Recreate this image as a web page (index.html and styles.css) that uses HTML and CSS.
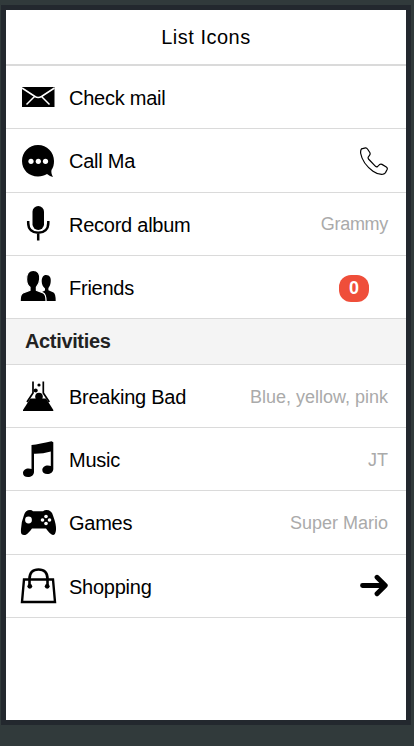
FILE: index.html
```html
<!DOCTYPE html>
<html lang="en">
<head>
<meta charset="utf-8">
<title>List Icons</title>
<link rel="stylesheet" href="styles.css">
</head>
<body>
<main class="screen">
  <header class="bar"><h1>List Icons</h1></header>
  <ul class="list">
    <li class="item">
      <svg class="icon" viewBox="0 0 36 36"><path d="M2 8h32.500v20H2z"/><path d="M2 9l13 8.500q3 2 6.500 0l13-8.500M6.500 25.500l8-8M29.500 25.500l-8-8" fill="none" stroke="#fff" stroke-width="1.500"/></svg>
      <span class="label">Check mail</span>
    </li>
    <li class="item tall">
      <svg class="icon" viewBox="0 0 36 36"><path d="M18 2C9 2 2 9 2 18s7 15.500 16 15.500c3.500 0 6.500-1 9-2.500 2 1.500 4 2.500 6 3-1.300-2.200-2-4.500-1.500-7 1.800-2.500 2.500-5.500 2.500-9 0-9-7-16-16-16z"/><g fill="#fff"><circle cx="11" cy="18.300" r="2.600"/><circle cx="18.300" cy="18.300" r="2.600"/><circle cx="25.500" cy="18.300" r="2.600"/></g></svg>
      <span class="label">Call Ma</span>
      <svg class="tail" viewBox="0 0 28 28"><path class="line" d="M1.500 1.800L5.500 .8Q6.800 .7 7.500 2l2.300 3.500q.8 1.500-.3 2.800L8.300 10q-.5 1 .2 2l7 7.300q1 .8 2 .3l2-2q1.200-.8 2.500-.2l4.300 2.500q1.500 1 .8 2.700l-1.600 3q-1 1.300-2.500 1.600-5 .6-10-3Q2.500 16.500 .7 6.500.3 3.500 1.500 1.800z"/></svg>
    </li>
    <li class="item">
      <svg class="icon" viewBox="0 0 36 36"><rect x="12.500" y="0" width="11.500" height="24" rx="5.750"/><path d="M8.200 15v2C8.200 23.500 12.500 26.800 18.200 26.800S28.300 23.500 28.300 17v-2M18.200 26.500v8" fill="none" stroke="#000" stroke-width="2.500"/></svg>
      <span class="label">Record album</span>
      <span class="note wide">Grammy</span>
    </li>
    <li class="item">
      <svg class="icon" viewBox="0 -1 36 36"><path d="M26 5c4 0 5.200 3 4.700 7-.2 3-1.500 5-2.300 6v2.300l5.100 2.200q2.200 1.200 2.200 8.500H26q0-6-2-8l-2-1 3-1.500V18.500c-2-2-3.300-4-3.300-7 0-4 1.500-6.500 4.300-6.500z"/><path stroke="#fff" stroke-width="1.200" d="M13.200 .4c5 0 7 3.500 6.500 9-.3 4-2 6.500-3.300 7.800v3.100l6.800 2.700q2.900 1.200 2.900 8.600H.1q0-7.400 2.900-8.600l7-2.700v-3.100C8 15.700 6.700 13.400 6.600 9.400c0-5.500 1.600-9 6.600-9z"/></svg>
      <span class="label">Friends</span>
      <span class="badge">0</span>
    </li>
  </ul>
  <h2 class="divider">Activities</h2>
  <ul class="list">
    <li class="item">
      <svg class="icon" viewBox="0 0 36 36"><path d="M13 3.500v11.500L7 24M23.300 3.500V15l6 9" fill="none" stroke="#000" stroke-width="1.700"/><path d="M10.300 20.500h15.800L33.300 32v1H3v-1z"/><circle cx="19" cy="18.500" r="3.800"/><circle cx="15.700" cy="12.500" r="2"/><circle cx="19" cy="7" r="1.600"/></svg>
      <span class="label">Breaking Bad</span>
      <span class="note">Blue, yellow, pink</span>
    </li>
    <li class="item">
      <svg class="icon" viewBox="0 0 36 36"><path d="M11.500 4Q20 3 31.500 .2l1.800 1V28c0 3-2.800 5-6 5-3 0-5-1.500-5-4s2.500-4.500 5.500-4.500q2 0 3 .6V10.500q-8 2.500-16.800 2.300V31c0 3-2.800 5-6 5s-5-1.500-5-4 2.500-4.500 5.500-4.500q2 0 3 .5V5z"/></svg>
      <span class="label">Music</span>
      <span class="note">JT</span>
    </li>
    <li class="item tall">
      <svg class="icon" viewBox="0 0 36 36"><path d="M10 5q2 0 3 1.200h10Q24.500 5 26.500 5q5 0 6.500 5.500Q36.500 20 36 25q-.5 5-3 5-2.500 0-7-6.500h-14C7 30 5.500 30 4 30 .8 30 .8 27 1 24Q1.500 16 4 10 5.500 5 10 5z"/><g fill="#fff"><circle cx="8.500" cy="15" r="3.400"/><circle cx="26" cy="11.500" r="1.800"/><circle cx="26" cy="18.500" r="1.800"/><circle cx="22.500" cy="15" r="1.800"/><circle cx="29.500" cy="15" r="1.800"/></g></svg>
      <span class="label">Games</span>
      <span class="note">Super Mario</span>
    </li>
    <li class="item">
      <svg class="icon" viewBox="0 0 36 36"><path d="M4 11.500h29l2 22.500H2z" fill="none" stroke="#000" stroke-width="2.400"/><path d="M9.500 18V11q0-9.500 9-9.500T27.500 11v7" fill="none" stroke="#000" stroke-width="2.600"/><circle cx="9.800" cy="18.300" r="2.400"/><circle cx="27.200" cy="18.300" r="2.400"/></svg>
      <span class="label">Shopping</span>
      <svg class="tail" viewBox="0 0 28 28"><path d="M2.500 13.500H24M17 5.200l8.300 8.300-8.300 8.300" fill="none" stroke="#000" stroke-width="4.800" stroke-linecap="round" stroke-linejoin="round"/></svg>
    </li>
  </ul>
</main>
</body>
</html>
```
FILE: styles.css
```css
* {
  box-sizing: border-box;
}

body {
  margin: 0;
  padding: 5px 3px 0 1px;
  height: 746px;
  overflow: hidden;
  background: #313a3b;
  font-family: "Liberation Sans", Arial, sans-serif;
  color: #000;
}

.screen {
  height: 720px;
  border: 5px solid #23282e;
  background: #fff;
}

.bar {
  height: 56px;
  border-bottom: 2px solid #dadada;
}

.bar h1 {
  margin: 0;
  text-align: center;
  font-size: 20px;
  font-weight: 400;
  line-height: 54px;
  letter-spacing: 0.5px;
}

.list {
  margin: 0;
  padding: 0;
  list-style: none;
}

.item {
  display: flex;
  align-items: center;
  height: 63px;
  padding: 0 18px 0 14px;
  border-bottom: 1px solid #dadada;
}

.tall {
  height: 64px;
}

.icon {
  width: 36px;
  height: 36px;
  margin-right: 13px;
  overflow: visible;
}

.label {
  padding-top: 2px;
  font-size: 20px;
  letter-spacing: -0.25px;
}

.note {
  margin-left: auto;
  padding-top: 2px;
  font-size: 18px;
  color: #aaa;
}

.wide {
  padding-top: 0;
  letter-spacing: -0.3px;
}

.tail {
  width: 28px;
  height: 28px;
  margin-left: auto;
}

.line {
  fill: none;
  stroke: #000;
  stroke-width: 1.2;
}

.badge {
  width: 30px;
  height: 27px;
  margin: 2px 19px 0 auto;
  border-radius: 12px;
  background: #ef4e3a;
  color: #fff;
  font-size: 18px;
  font-weight: 700;
  line-height: 26px;
  text-align: center;
}

.divider {
  height: 46px;
  margin: 0;
  padding-left: 19px;
  border-bottom: 1px solid #dadada;
  background: #f4f4f4;
  color: #222;
  font-size: 20px;
  line-height: 44px;
  letter-spacing: -0.35px;
}
```
